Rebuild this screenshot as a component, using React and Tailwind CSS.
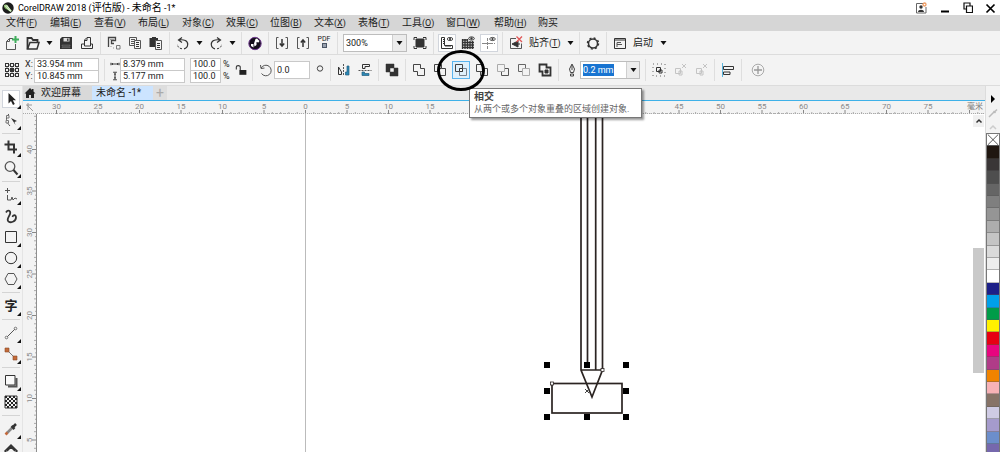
import React from 'react'

const menus = [
  ['文件', 'F'], ['编辑', 'E'], ['查看', 'V'], ['布局', 'L'], ['对象', 'C'], ['效果', 'C'], ['位图', 'B'],
  ['文本', 'X'], ['表格', 'T'], ['工具', 'O'], ['窗口', 'W'], ['帮助', 'H'], ['购买', ''],
]

const swatches = [
  [null, '#1f1610', '#3a3637', '#4e4e4e', '#656565'],
  ['#7f7f7f', '#959595', '#adadad', '#c4c4c4', '#dadada'],
  ['#ededed', '#ffffff', '#1d2088', '#00a0e9', '#009c48'],
  ['#fff100', '#e60012', '#e8057f', '#b03c88', '#f08300'],
  ['#f7b2b6', '#877367', '#cfcbe4', '#a59bcc', '#6c8ecb'],
  ['#7668ad', '#5a4a9a', '#3e3a8a', '#2a6a9a', '#5ab0c0'],
]

// drawings on a 16 x 16 grid
const icons = {
  newDoc: <><path d="M9 3.500H5.500L2.500 6.500V14.500H11.500V9" stroke="#555" /><path d="M2.500 6.500H5.500V3.500" stroke="#555" /><path d="M11.500 1V8M8 4.500H15" stroke="#3fae5c" strokeWidth="2" /></>,
  open: <><path d="M2.500 14V3H6.500L8 5H12.500V7" strokeWidth="1.800" /><path d="M2.500 14L5 7.500H14L12 14Z" strokeWidth="1.500" /></>,
  save: <><path d="M2 4L4 2H14V14H2Z" fill="#333" stroke="none" /><path d="M5.500 3H11.500V6.500H5.500Z" fill="#ddd" stroke="none" /><path d="M9 3.500H10.500V6H9ZM4 10H12V11H4ZM4 12H12V12.700H4Z" fill="#333" stroke="#aaa" strokeWidth=".3" /></>,
  print: <><path d="M2.500 9H13.500V13.500H2.500Z" /><path d="M5.500 11V5L8 2.500H11.500V11Z" fill="#f3f3f3" /><path d="M5.500 5.500H8V3" /></>,
  cut: <><path d="M2.500 12V2.500H9.500V5.500H5.500V8.500H8" stroke="#444" strokeWidth="1.300" /><path d="M10.500 10.500H14V14H10.500Z" stroke="#777" /><path d="M5 11V12M7.500 12.500V13.500M8 4.500H4" stroke="#999" /></>,
  copy: <><path d="M2.500 2.500H9.500V10.500H2.500ZM4 4.500H8M4 6.500H8M4 8.500H8" stroke="#555" /><path d="M7.500 5.500H13.500V13.500H7.500Z" fill="#f3f3f3" stroke="#555" /><path d="M9 7.500H12M9 9.500H12M9 11.500H12" /></>,
  paste: <><path d="M1.500 3H4V2H8V3H10V12H1.500Z" fill="#333" stroke="none" /><path d="M7.500 5.500H13.500V14.500H7.500Z" fill="#f3f3f3" stroke="#555" /><path d="M9 8.500H12M9 10.500H12M9 12.500H12" /></>,
  undo: <><path d="M7 2.500L3.500 5L7 7.500M4 5C9 4 13 6 12.700 9.500C12.500 12 11 13.500 9 13.800" strokeWidth="1.200" /><path d="M7 13.800C4 13.500 2.500 11.500 2.500 9" strokeDasharray="2 1.500" /></>,
  redo: <><path d="M9 2.500L12.500 5L9 7.500M12 5C7 4 3 6 3.300 9.500C3.500 12 5 13.500 7 13.800" strokeWidth="1.200" /><path d="M9 13.800C12 13.500 13.500 11.500 13.500 9" strokeDasharray="2 1.500" /></>,
  connect: <><circle cx="8" cy="8.500" r="6.200" fill="#15101b" stroke="#6f3a8e" /><path d="M8.500 4L10 3.500L12.500 6L11.500 7.500L9.500 7V10L7.500 11.500L7 8.500ZM4 9H6.500V12.500L4 11Z" fill="#fff" stroke="none" /></>,
  importFile: <><path d="M4.500 2.500H2.500V13.500H4.500M11.500 2.500H13.500V13.500H11.500" stroke="#555" /><path d="M8 4V11M5.800 8.500L8 11L10.200 8.500" strokeWidth="1.500" /></>,
  exportFile: <><path d="M4.500 2.500H2.500V13.500H4.500M11.500 2.500H13.500V13.500H11.500" stroke="#555" /><path d="M8 12V5M5.800 7.500L8 5L10.200 7.500" strokeWidth="1.500" /></>,
  full: <><path d="M4 4H12V12H4Z" fill="#333" /><path d="M2 5V2.500H5M11 2.500H14V5M14 11V13.500H11M5 13.500H2V11" /></>,
  rulers: <><path d="M2.500 2.500H5.500V10.500H13.500V13.500H2.500Z" /><path d="M4 4.500H5M4 6.500H5M4 8.500H5M7 12V11M9 12V11M11 12V11" /><ellipse cx="11" cy="4" rx="2.800" ry="1.600" stroke="#555" /><circle cx="11" cy="4" r=".7" fill="#333" /></>,
  grid: <><path d="M2.500 4V14M5 4V14M7.500 4V14M10 6V14M12.500 6V14M2 5H8M2 7.500H14M2 10H14M2 12.500H14" strokeWidth="1.300" /><ellipse cx="11.500" cy="3.500" rx="2.800" ry="1.600" /><circle cx="11.500" cy="3.500" r=".7" fill="#333" /></>,
  guides: <><path d="M6.500 3V14" strokeDasharray="3 1" stroke="#888" /><path d="M1 8.500H14" stroke="#888" strokeDasharray="5 1" /><ellipse cx="11.500" cy="4" rx="2.800" ry="1.600" stroke="#555" /><circle cx="11.500" cy="4" r=".7" fill="#333" /></>,
  snapOff: <><path d="M8 3.500H2.500V13.500H13.500V8.500" stroke="#555" /><path d="M4 9L10 6V12ZM7 9H12" fill="#333" /><path d="M8.500 1.500L14 7M14 1.500L8.500 7" stroke="#e05555" strokeWidth="1.300" /></>,
  gear: <><circle cx="8" cy="8.500" r="4.500" strokeWidth="1.500" /><circle cx="8" cy="8.500" r="5.500" strokeWidth="1.500" strokeDasharray="2 2.320" /></>,
  launch: <><path d="M2.500 3.500H13.500V13.500H2.500ZM2.500 5H13.500" /><path d="M5 7.500H9M5 9.500H10M5 7.500V12" stroke="#555" /></>,
  origin: <><path d="M3 3H13V13H3ZM8 3V13M3 8H13" strokeWidth="1.300" strokeDasharray="1.500 1" />{[3, 8, 13].map((x) => [3, 8, 13].map((y) => <rect key={x + '-' + y} x={x - 1.5} y={y - 1.5} width="3" height="3" fill={x === 8 && y === 8 ? '#333' : '#f3f3f3'} />))}</>,
  lock: <><path d="M5 8H13V13.500H5Z" fill="#222" stroke="none" /><path d="M1.500 7.500V4.500C1.500 2.500 6 2.500 6 4.500V8" strokeWidth="1.200" /></>,
  rotate: <><path d="M3.200 6A5.300 5.300 0 1 1 3.500 11.500M2.500 3L3 6.500L6.500 6" stroke="#555" /></>,
  mirrorH: <><path d="M7.500 2V14" strokeDasharray="2 1" stroke="#555" /><path d="M2.500 5V12.500H5.500V10M2.500 5L5.500 10" /><path d="M13 4V13H9.500V10H11V4Z" fill="#2b87b5" stroke="#235f80" strokeWidth=".7" /></>,
  mirrorV: <><path d="M1.500 8.500H14.500" strokeDasharray="2 1" stroke="#555" /><path d="M12.500 2.500H5.500V6.500H8V4.500H12.500Z" /><path d="M12 13.500H5V10H7.500V11.500H12Z" fill="#2b87b5" stroke="#235f80" strokeWidth=".7" /></>,
  combine: <path fillRule="evenodd" d="M2 2H10V6H14V14H6V10H2ZM6 6V10H10V6Z" fill="#333" stroke="#333" strokeWidth=".5" />,
  weld: <path d="M2.500 2.500H9.500V6.500H13.500V13.500H6.500V9.500H2.500Z" stroke="#444" />,
  trim: <path d="M6.500 9.500H2.500V2.500H9.500V6.500H13.500V13.500H6.500V6.500H9.500" stroke="#444" />,
  intersect: <><path d="M2.500 2.500H9.500V9.500H2.500Z" stroke="#444" /><path d="M6.500 6.500H13.500V13.500H6.500Z" stroke="#78828e" /><path d="M6.500 6.500H9.500V9.500H6.500Z" fill="#fff" /></>,
  simplify: <path d="M2.500 2.500H9.500V9.500H2.500ZM9.500 6.500H13.500V13.500H6.500V9.500" stroke="#444" />,
  frontMinus: <><path d="M9.500 6.500H13.500V13.500H6.500V9.500" stroke="#555" /><path d="M2.500 2.500H9.500V9.500H2.500Z" stroke="#aaa" /></>,
  backMinus: <><path d="M6.500 9.500H2.500V2.500H9.500V6.500" stroke="#666" /><path d="M6.500 6.500H13.500V13.500H6.500Z" stroke="#aaa" /></>,
  boundary: <><path d="M2.500 2.500H9.500V5.500H13.500V13.500H5.500V9.500H2.500Z" strokeWidth="1.800" /><path d="M8 8H11V11H8Z" fill="#333" /></>,
  pen: <><path d="M8 2L5.500 7L6.500 10.500H9.500L10.500 7ZM8 3V8M6.500 12H9.500V14H6.500Z" stroke="#444" /></>,
  group: <><path d="M5.500 5.500H9.500V9.500H5.500ZM8 8H11V11H8Z" /><path d="M2 2H14V14H2Z" stroke="#666" strokeDasharray="1 3" /></>,
  ungroup: <><path d="M3.500 6.500H8.500V11.500H3.500ZM7 9H10V13H7Z" stroke="#c4c4c4" /><path d="M10 2L14 6M14 2L10 6" stroke="#c4c4c4" /></>,
  align: <><path d="M2.500 1V15" stroke="#5ab4dc" /><path d="M3.500 4.500H13.500V7.500H3.500ZM3.500 10H10V12.500H3.500Z" /></>,
  add: <><circle cx="8" cy="8" r="5.800" stroke="#aaa" /><path d="M8 4V12M4 8H12" stroke="#999" strokeWidth="1.300" /></>,
  hSize: <path d="M1.500 6V10M14.500 6V10M2 8H14M4 6.500V9.500M12 6.500V9.500" strokeWidth="1.500" />,
  vSize: <path d="M5 2H11M5 14H11M8 3V13M6.500 5H9.500M6.500 11H9.500" strokeWidth="1.500" />,
  pick: <path d="M5.500 2V12.500L8 10L10 14L11.800 13L9.800 9.300H13Z" fill="#222" stroke="none" />,
  shape: <><path d="M6 2C2 5 3 10 7 14" stroke="#555" /><path d="M3.500 3.500H6V6H3.500ZM3 8.500H5.500V11H3Z" fill="#f3f3f3" stroke="#777" /><path d="M8 6L14 9L11.500 10L12.500 13Z" fill="#333" stroke="none" /></>,
  crop: <path d="M5.500 1.500V10.500H14M1.500 5.500H11V14.500" strokeWidth="2" />,
  zoom: <><circle cx="7" cy="6.500" r="4.800" stroke="#555" strokeWidth="1.300" /><path d="M10.500 10L14.500 14.500" strokeWidth="2" /></>,
  freehand: <><path d="M4.500 1V6M2 3.500H7M4.500 8V13H8L9 10L10 13L12 11L14 12" stroke="#555" /></>,
  artistic: <path d="M3 4.500C5 1 8 3 7 6C6 9 3 11.500 5.500 13.500C8.500 15.500 13 13 13 9.500C12.800 6.500 10 6.500 9.500 9" strokeWidth="1.800" />,
  rect: <path d="M2.500 2.500H13.500V13.500H2.500Z" />,
  ellipse: <circle cx="8" cy="8" r="5.700" />,
  polygon: <path d="M5 2.500H11L14 8L11 13.500H5L2 8Z" stroke="#555" />,
  line: <><path d="M4 12L12 4" stroke="#555" /><circle cx="3.500" cy="12.500" r="1.300" stroke="#777" /><circle cx="12.500" cy="3.500" r="1.300" stroke="#777" /></>,
  connector: <><path d="M4 4L12 12" stroke="#777" /><path d="M2 2H6V6H2ZM10 10H14V14H10Z" fill="#c46b3a" stroke="#8a4a2a" strokeWidth=".6" /></>,
  shadow: <><path d="M5 13.500H13.500V5" strokeWidth="2" stroke="#555" /><path d="M2.500 2.500H12V12H2.500Z" fill="#fafafa" /></>,
  checker: <><path d="M2 2H14V14H2Z" />{[0, 1, 2, 3, 4, 5].map((r) => [0, 1, 2].map((c) => <rect key={r + '-' + c} x={2 + c * 4 + (r % 2) * 2} y={2 + r * 2} width="2" height="2" fill="#222" stroke="none" />))}</>,
  eyedrop: <><path d="M9 7L3.500 12.500" strokeWidth="2.500" stroke="#888" /><path d="M4.500 11.500L2.500 13.500" strokeWidth="2.500" stroke="#c4683a" /><path d="M8.500 5L11.500 8M10.500 5.500L13 3" strokeWidth="2.500" /></>,
  fill: <path d="M2 9L8 3L14 9L8 15ZM4 9L8 5L12 9" strokeWidth="1.500" />,
}

function Icon({ name, className = 'size-4' }) {
  return (
    <svg viewBox="0 0 16 16" className={className + ' shrink-0'} fill="none" stroke="#333" strokeWidth="1">
      {icons[name]}
    </svg>
  )
}

function Tool({ name, label, boxed }) {
  return (
    <button aria-label={label} className={'size-4 shrink-0 ' + (boxed ? 'outline outline-gray-300 bg-white' : '')}>
      <Icon name={name} />
    </button>
  )
}

function Sep() {
  return <div className="w-px h-[22px] shrink-0 bg-[#dedede]"></div>
}

function Caret() {
  return (
    <svg viewBox="0 0 7 4" className="w-[7px] h-1 shrink-0"><path d="M0.500 0H6.500L3.500 4Z" fill="#111" /></svg>
  )
}

function Field({ label, value, className = 'w-16' }) {
  return (
    <input
      aria-label={label}
      defaultValue={value}
      className={'h-[13px] -mt-px first:mt-0 border border-[#c9c9c9] bg-white pl-0.5 text-[9px] leading-[11px] ' + className}
    />
  )
}

function MenuBar() {
  return (
    <nav className="h-4 shrink-0 flex items-center bg-[#d6d6d6] pl-1.5">
      {menus.map(([text, key]) => (
        <button key={text} className={'shrink-0 text-left whitespace-nowrap text-[10px] leading-4 ' + (key === 'W' ? 'w-12' : 'w-11')}>
          {text}{key && <span className="text-[9px]">(<u>{key}</u>)</span>}
        </button>
      ))}
    </nav>
  )
}

function StandardBar() {
  return (
    <div className="h-6 shrink-0 flex items-center gap-[5px] pl-1 border-b border-[#dcdcdc]">
      <Tool name="newDoc" label="新建" />
      <Tool name="open" label="打开" />
      <Caret />
      <Tool name="save" label="保存" />
      <Tool name="print" label="打印" />
      <Sep />
      <Tool name="cut" label="剪切" />
      <Tool name="copy" label="复制" />
      <Tool name="paste" label="粘贴" />
      <Sep />
      <Tool name="undo" label="撤消" />
      <Caret />
      <Tool name="redo" label="重做" />
      <Caret />
      <Sep />
      <Tool name="connect" label="搜索内容" />
      <Sep />
      <Tool name="importFile" label="导入" />
      <Tool name="exportFile" label="导出" />
      <button className="w-4 h-4 shrink-0 flex flex-col items-center text-[7px] leading-[8px]">
        PDF
        <span className="size-[5px] border border-gray-600 bg-gray-400"></span>
      </button>
      <Sep />
      <div className="flex shrink-0 items-center w-16 h-[18px] border border-[#bdbdbd] bg-white">
        <input aria-label="缩放级别" defaultValue="300%" className="w-12 h-4 pl-0.5 text-[9px]" />
        <button aria-label="缩放列表" className="flex-1 h-full flex items-center justify-center border-l border-[#cfcfcf] bg-[#ececec]"><Caret /></button>
      </div>
      <Tool name="full" label="全屏预览" />
      <Sep />
      <Tool name="rulers" label="显示标尺" boxed />
      <Tool name="grid" label="显示网格" />
      <Tool name="guides" label="显示辅助线" boxed />
      <Sep />
      <Tool name="snapOff" label="贴齐关闭" />
      <button className="shrink-0 w-[33px] whitespace-nowrap text-left text-[10px]">贴齐<span className="text-[9px]">(<u>T</u>)</span></button>
      <Caret />
      <Sep />
      <Tool name="gear" label="选项" />
      <Sep />
      <Tool name="launch" label="应用程序" />
      <button className="shrink-0 w-[22px] text-left text-[10px]">启动</button>
      <Caret />
    </div>
  )
}

function PropertyBar() {
  return (
    <div className="h-[30px] shrink-0 flex items-center gap-[5px] pl-1">
      <Tool name="origin" label="对象原点" />
      <div className="shrink-0 flex w-[74px] text-[9px] leading-3">
        <div className="w-[9px]">X:<br />Y:</div>
        <div className="flex flex-col">
          <Field label="X" value="33.954 mm" className="w-[65px]" />
          <Field label="Y" value="10.845 mm" className="w-[65px]" />
        </div>
      </div>
      <Sep />
      <div className="shrink-0 flex w-[75px]">
        <div className="w-[10px] flex flex-col justify-around">
          <Icon name="hSize" className="size-[10px]" />
          <Icon name="vSize" className="size-[10px]" />
        </div>
        <div className="flex flex-col">
          <Field label="宽度" value="8.379 mm" className="w-[65px]" />
          <Field label="高度" value="5.177 mm" className="w-[65px]" />
        </div>
      </div>
      <div className="shrink-0 flex w-10 text-[9px] leading-3">
        <div className="flex flex-col">
          <Field label="水平缩放" value="100.0" className="w-[31px]" />
          <Field label="垂直缩放" value="100.0" className="w-[31px]" />
        </div>
        <div className="pl-0.5">%<br />%</div>
      </div>
      <button aria-label="锁定比率" className="w-3 shrink-0"><Icon name="lock" className="size-[14px]" /></button>
      <Sep />
      <div className="shrink-0 flex items-center">
        <Icon name="rotate" />
        <input aria-label="旋转角度" defaultValue="0.0" className="w-9 h-[18px] border border-[#c9c9c9] bg-white pl-0.5 text-[9px]" />
      </div>
      <svg viewBox="0 0 10 16" className="w-2.5 h-4 shrink-0" fill="none" stroke="#444"><circle cx="5" cy="6.500" r="2.700" /></svg>
      <Sep />
      <Tool name="mirrorH" label="水平镜像" />
      <Tool name="mirrorV" label="垂直镜像" />
      <Sep />
      <Tool name="combine" label="合并" />
      <Sep />
      <Tool name="weld" label="焊接" />
      <Tool name="trim" label="修剪" />
      <div className="relative size-4 shrink-0">
        <button aria-label="相交" aria-describedby="intersect-tip" className="block size-4 bg-[#dff0fb] outline outline-[#5ab4ee]">
          <Icon name="intersect" />
        </button>
        <div id="intersect-tip" role="tooltip" className="absolute z-10 left-4 top-[26px] w-[173px] h-[30px] border border-[#777] bg-white px-1 py-px text-[10px] leading-[13px] whitespace-nowrap shadow-[2px_2px_2px_#0006]">
          <b className="block text-[#444]">相交</b>
          <span className="block text-[9px] text-[#666]">从两个或多个对象重叠的区域创建对象.</span>
        </div>
        <div className="absolute z-20 -left-4 -top-3 w-12 h-[41px] rounded-[50%] border-[3px] border-black pointer-events-none"></div>
      </div>
      <Tool name="simplify" label="简化" />
      <Tool name="frontMinus" label="移除后面对象" />
      <Tool name="backMinus" label="移除前面对象" />
      <Tool name="boundary" label="边界" />
      <Sep />
      <div className="shrink-0 flex items-center">
        <Icon name="pen" />
        <div className="flex w-[60px] h-[18px] border border-[#bdbdbd] bg-white items-center">
          <div className="flex-1 pl-0.5 flex">
            <input aria-label="轮廓宽度" defaultValue="0.2 mm" className="w-[31px] h-3 bg-[#1874d1] text-white text-[9px] leading-3" />
          </div>
          <button aria-label="轮廓宽度列表" className="w-[13px] h-full flex items-center justify-center border-l border-[#cfcfcf] bg-[#ececec]"><Caret /></button>
        </div>
      </div>
      <Sep />
      <Tool name="group" label="组合对象" />
      <Tool name="ungroup" label="取消组合对象" />
      <Tool name="ungroup" label="取消组合所有对象" />
      <Sep />
      <Tool name="align" label="对齐与分布" />
      <Sep />
      <button aria-label="自定义" className="w-[22px] shrink-0 flex justify-center"><Icon name="add" /></button>
    </div>
  )
}

const tools = [
  ['pick', '选择', 1], ['shape', '形状', 1], null,
  ['crop', '裁剪', 1], ['zoom', '缩放', 1], null,
  ['freehand', '手绘', 1], ['artistic', '艺术笔', 0], ['rect', '矩形', 1], ['ellipse', '椭圆形', 1], ['polygon', '多边形', 1], null,
  ['text', '文本', 1], null,
  ['line', '平行度量', 1], ['connector', '直线连接器', 1], null,
  ['shadow', '阴影', 1], ['checker', '透明度', 0], null,
  ['eyedrop', '颜色滴管', 1], ['fill', '交互式填充', 0],
]

function Toolbox() {
  return (
    <aside className="w-[23px] shrink-0 flex flex-col items-center gap-[5px] pt-[5px] overflow-hidden border-r border-[#e4e4e4]">
      {tools.map((t, i) =>
        t === null ? (
          <div key={i} className="w-[18px] h-px shrink-0 bg-[#d4d4d4]"></div>
        ) : (
          <button key={i} aria-label={t[1]} className={'relative size-4 shrink-0 ' + (i === 0 ? 'bg-white outline outline-gray-300' : '')}>
            {t[0] === 'text' ? <span className="block text-[13px] leading-4 font-bold">字</span> : <Icon name={t[0]} />}
            {t[2] === 1 && (
              <svg viewBox="0 0 4 4" className="absolute -right-0.5 -bottom-0.5 size-1"><path d="M4 0V4H0Z" fill="#111" /></svg>
            )}
          </button>
        )
      )}
    </aside>
  )
}

// 5 mm take 41.5px at this zoom level
const step = 41.5
const minor = [1, 2, 3, 4, 5, 6, 7, 8, 9]

// the stretch from 20 to 40 lies under the tooltip
const hLabels = [-6, -5, -4, -3, -2, -1, 0, 1, 2, 3, 9, 10, 11, 12, 13, 14, 15]
const vLabels = [8, 7, 6, 5, 4, 3, 2, 1]

function HRuler() {
  const marks = []
  for (let i = -6; i < 40; i++) marks.push(i)
  return (
    <svg className="h-[13px] w-full block" aria-hidden="true">
      {marks.map((i) => {
        const x = 282.5 + i * step
        return (
          <g key={i}>
            <path d={`M${x} 9V13`} stroke="#888" />
            {minor.map((k) => (
              <path key={k} d={`M${x + k * 4.15} ${k % 2 ? 12 : 11}V13`} stroke="#aaa" />
            ))}
          </g>
        )
      })}
      {hLabels.map((i) => (
        <text key={i} x={282.5 + i * step} y="8" textAnchor="middle" fontSize="8" fill="#8a8a8a">{Math.abs(i * 5)}</text>
      ))}
      <path d="M3 4H9M5 2V9M4 4L10 10" stroke="#999" fill="none" />
      <path d="M0 12.500H4000" stroke="#aaa" strokeDasharray="1 1" />
    </svg>
  )
}

function VRuler() {
  const marks = []
  for (let i = 9; i > -20; i--) marks.push(i)
  return (
    <svg className="w-[14px] h-full shrink-0 block border-r border-[#8f8f8f]" aria-hidden="true">
      {marks.map((i) => {
        const y = 367.5 - i * step
        return (
          <g key={i}>
            <path d={`M9 ${y}H13`} stroke="#888" />
            {minor.map((k) => (
              <path key={k} d={`M${k % 2 ? 12 : 11} ${y + k * 4.15}H13`} stroke="#aaa" />
            ))}
          </g>
        )
      })}
      {vLabels.map((i) => (
        <text key={i} x="9" y={367.5 - i * step} textAnchor="middle" fontSize="8" fill="#8a8a8a" transform={`rotate(-90 9 ${367.5 - i * step})`}>{i * 5}</text>
      ))}
    </svg>
  )
}

function Drawing() {
  return (
    <svg className="block w-full h-full" fill="none" stroke="#2b2422" strokeWidth="1.700">
      <path d="M268.500 0V2000" stroke="#bbb" strokeWidth="1" />
      <path d="M544 0V256L555 283L565.500 256V0M544 256H565.500M550.500 0V248M558.700 0V256" />
      <rect x="515" y="269.500" width="70" height="29.500" />
      <path d="M548 275L552 279M552 275L548 279" stroke="#444" strokeWidth="1" />
      <rect x="513.500" y="268" width="3" height="3" fill="#fff" strokeWidth=".8" />
      <rect x="564" y="254.500" width="3" height="3" fill="#fff" strokeWidth=".8" />
      {[[507, 248], [547, 248], [586, 248], [507, 274], [586, 274], [507, 300], [547, 300], [586, 300]].map(([x, y]) => (
        <rect key={x + '-' + y} x={x} y={y} width="6" height="6" fill="#000" stroke="none" />
      ))}
    </svg>
  )
}

function Workspace() {
  return (
    <main className="flex-1 min-w-0 flex flex-col">
      <div className="h-[15px] shrink-0 flex items-center bg-[#e9e9e9] border-b border-[#3fb1e8] text-[10px] leading-[14px]">
        <button className="flex items-center h-full w-[69px] bg-[#d9d9d9]">
          <svg viewBox="0 0 12 12" className="w-3 h-3 mx-px" fill="#222"><path d="M6 1L0.500 6.500H2V11H5V8H7V11H10V6.500H11.500L9.500 4.500V2H8V3Z" /></svg>
          <span className="pl-1">欢迎屏幕</span>
        </button>
        <button className="h-full w-[61px] bg-[#cce4ff] pl-1 text-left">未命名 -1*</button>
        <button aria-label="新建文档" className="h-full w-[14px] bg-[#dedede] text-[#aaa] text-sm leading-3">+</button>
      </div>
      <div className="relative shrink-0 bg-[#f3f3f3]">
        <HRuler />
        <span className="absolute right-0.5 top-0 text-[8px] leading-[11px] text-[#777]">毫米</span>
      </div>
      <div className="flex-1 min-h-0 flex">
        <VRuler />
        <div className="flex-1 min-w-0 bg-white"><Drawing /></div>
        <div className="w-3 shrink-0 flex flex-col bg-white pr-px">
          <button aria-label="向上滚动" className="h-3 mt-px shrink-0 bg-[#f0f0f0] flex items-center justify-center">
            <svg viewBox="0 0 8 8" className="size-2" fill="none" stroke="#333" strokeWidth="1.500"><path d="M1.500 5.500L4 3L6.500 5.500" /></svg>
          </button>
          <div className="mt-[121px] h-[125px] shrink bg-[#c9c9c9]"></div>
        </div>
      </div>
    </main>
  )
}

function Palette() {
  return (
    <aside className="w-[15px] shrink-0 border-l border-[#dcdcdc] overflow-hidden">
      <div className="h-[47px] flex flex-col items-center justify-between pt-[9px]">
        <svg viewBox="0 0 4 8" className="w-1 h-2"><path d="M0 0L4 4L0 8Z" /></svg>
        <svg viewBox="0 0 10 10" className="size-2.5" stroke="#bbb" strokeWidth="1.500"><path d="M1 9L6 4M5.500 3L7.500 5M7 3.500L9 1.500" /></svg>
        <svg viewBox="0 0 10 8" className="w-2.5 h-2 mb-0.5" fill="none" stroke="#ccc" strokeWidth="1.500"><path d="M2 6L5 3L8 6" /></svg>
      </div>
      <div className="border-x border-t border-[#777]">
        {swatches.map((group, g) => (
          <div key={g} className="h-[62px] grid grid-rows-5">
            {group.map((c, i) =>
              c ? (
                <button key={i} aria-label={c} className="border-b border-[#5556]" style={{ backgroundColor: c }}></button>
              ) : (
                <button key={i} aria-label="无填充" className="border-b border-[#555] bg-white">
                  <svg viewBox="0 0 12 12" className="size-full" stroke="#222" strokeWidth=".8"><path d="M0.500 0.500L11.500 11.500M11.500 0.500L0.500 11.500" /></svg>
                </button>
              )
            )}
          </div>
        ))}
      </div>
    </aside>
  )
}

export default function App() {
  return (
    <div className="h-screen flex flex-col overflow-hidden bg-[#f3f3f3] text-[#222] font-['Roboto','Noto_Sans_CJK_SC',sans-serif]">
      <header className="h-[15px] shrink-0 flex items-center bg-white pl-0.5 pr-1">
        <svg viewBox="0 0 12 12" className="size-3">
          <circle cx="6" cy="6" r="5.700" fill="#1c1c1c" />
          <path d="M2 3.500C3 2 5 2.500 6 4L10 9L8.500 10L5 7.500C3 6.500 1.500 5 2 3.500Z" fill="#8cc26a" />
          <path d="M3 3.500L8.500 9.500M4.500 3L9 9" stroke="#fff" strokeWidth=".8" />
        </svg>
        <h1 className="pl-1 text-[9px] leading-[15px] whitespace-nowrap text-black">
          CorelDRAW 2018 (<span className="text-[10px]">评估版</span>) - <span className="text-[10px]">未命名</span> -1*
        </h1>
        <div className="ml-auto flex items-center gap-[11px]">
          <button aria-label="登录">
            <svg viewBox="0 0 12 12" className="size-3" fill="none" stroke="#666"><path d="M8 1.500H1.500V11H11V5" /><circle cx="6" cy="5" r="1.700" fill="#333" stroke="none" /><path d="M3 10C3 7 9 7 9 10Z" fill="#333" stroke="none" /><circle cx="9.500" cy="2.500" r="1.500" stroke="#ee9a60" strokeWidth="1.300" /></svg>
          </button>
          <button aria-label="最小化">
            <svg viewBox="0 0 12 12" className="size-3" fill="#000"><path d="M3 8.500H11V10.500H3Z" /></svg>
          </button>
          <button aria-label="还原">
            <svg viewBox="0 0 12 12" className="size-3" fill="#fff" stroke="#111" strokeWidth="1.200"><path d="M3 1H9V7H3Z" /><path d="M5.500 4H11.500V10.500H5.500Z" /></svg>
          </button>
          <button aria-label="关闭">
            <svg viewBox="0 0 12 12" className="size-3" stroke="#000" strokeWidth="1.700"><path d="M2.500 2.500L10.500 10.500M10.500 2.500L2.500 10.500" /></svg>
          </button>
        </div>
      </header>
      <MenuBar />
      <StandardBar />
      <PropertyBar />
      <div className="flex-1 min-h-0 flex border-t border-[#dcdcdc]">
        <Toolbox />
        <Workspace />
        <Palette />
      </div>
    </div>
  )
}
